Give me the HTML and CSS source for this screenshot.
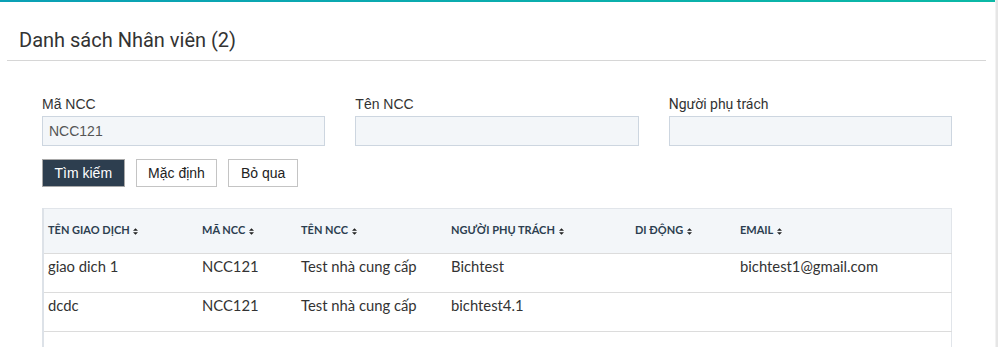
FILE: index.html
```html
<!DOCTYPE html>
<html lang="vi">
<head>
    <meta charset="UTF-8">
    <title>Danh sách Nhân viên</title>
    <link rel="stylesheet" href="styles.css">
</head>
<body>
    <div class="page">
        <div class="panel">
            <div class="topbar"></div>
            <div class="header">
                <h2>Danh sách Nhân viên (2)</h2>
            </div>

            <div class="content">
                <!-- Search form -->
                <div class="filters">
                    <div class="field">
                        <label>Mã NCC</label>
                        <input type="text" value="NCC121">
                    </div>
                    <div class="field">
                        <label>Tên NCC</label>
                        <input type="text">
                    </div>
                    <div class="field">
                        <label>Người phụ trách</label>
                        <input type="text">
                    </div>
                </div>

                <div class="actions">
                    <button class="btn btn-dark">Tìm kiếm</button>
                    <button class="btn">Mặc định</button>
                    <button class="btn">Bỏ qua</button>
                </div>

                <!-- Result table -->
                <table class="grid">
                    <thead>
                        <tr>
                            <th class="c1">Tên giao dịch <svg class="sort" viewBox="0 0 6 8"><path d="M0 3.2L3 0 6 3.2ZM0 4.8L3 8 6 4.8Z"/></svg></th>
                            <th class="c2">Mã NCC <svg class="sort" viewBox="0 0 6 8"><path d="M0 3.2L3 0 6 3.2ZM0 4.8L3 8 6 4.8Z"/></svg></th>
                            <th class="c3">Tên NCC <svg class="sort" viewBox="0 0 6 8"><path d="M0 3.2L3 0 6 3.2ZM0 4.8L3 8 6 4.8Z"/></svg></th>
                            <th class="c4">Người phụ trách <svg class="sort" viewBox="0 0 6 8"><path d="M0 3.2L3 0 6 3.2ZM0 4.8L3 8 6 4.8Z"/></svg></th>
                            <th class="c5">Di động <svg class="sort" viewBox="0 0 6 8"><path d="M0 3.2L3 0 6 3.2ZM0 4.8L3 8 6 4.8Z"/></svg></th>
                            <th class="c6">Email <svg class="sort" viewBox="0 0 6 8"><path d="M0 3.2L3 0 6 3.2ZM0 4.8L3 8 6 4.8Z"/></svg></th>
                        </tr>
                    </thead>
                    <tbody>
                        <tr>
                            <td>giao dich 1</td>
                            <td>NCC121</td>
                            <td>Test nhà cung cấp</td>
                            <td>Bichtest</td>
                            <td></td>
                            <td>bichtest1@gmail.com</td>
                        </tr>
                        <tr>
                            <td>dcdc</td>
                            <td>NCC121</td>
                            <td>Test nhà cung cấp</td>
                            <td>bichtest4.1</td>
                            <td></td>
                            <td></td>
                        </tr>
                        <tr class="empty">
                            <td></td><td></td><td></td><td></td><td></td><td></td>
                        </tr>
                    </tbody>
                </table>
            </div>
        </div>
        <div class="side"></div>
    </div>
</body>
</html>
```

FILE: styles.css
```css
body {
    margin: 0;
    background: #fff;
    font-family: "Liberation Sans", Arial, sans-serif;
    color: #333;
    overflow: hidden;
}
.page {
    display: flex;
    height: 347px;
}
.panel {
    flex: 1;
    min-width: 0;
}
.side {
    width: 2px;
    background: #e6e6e6;
    border-left: 1px solid #f2f2f2;
}
.topbar {
    height: 2px;
    background: linear-gradient(to right, #0aa0b5, #0bb9a6);
}
.header {
    margin: 0 9px 0 7px;
    height: 59px;
    border-bottom: 1px solid #d6d6d6;
    box-sizing: border-box;
    padding: 26px 0 0 12px;
}
.header h2 {
    margin: 0;
    font-family: Roboto, sans-serif;
    font-weight: 400;
    font-size: 20px;
    line-height: 24px;
    color: #333;
}
.content {
    margin-left: 42px;
    width: 910px;
    padding-top: 35px;
}
.filters {
    display: grid;
    grid-template-columns: repeat(3, 1fr);
    gap: 30px;
}
.field label {
    display: block;
    font-size: 14px;
    line-height: 17px;
    margin-bottom: 3px;
    color: #333;
}
.field:last-child label {
    font-family: Roboto, sans-serif;
}
.field input {
    display: block;
    width: 100%;
    box-sizing: border-box;
    height: 30px;
    border: 1px solid #cdd6e0;
    background: #f3f6f9;
    padding: 0 6px;
    font-family: "Liberation Sans", Arial, sans-serif;
    font-size: 14px;
    color: #555;
    outline: none;
}
.actions {
    display: flex;
    gap: 11px;
    margin-top: 13px;
}
.btn {
    height: 28px;
    padding: 0 11.5px;
    background: #fff;
    border: 1px solid #c4c4c4;
    font-family: "Liberation Sans", Arial, sans-serif;
    font-size: 14px;
    color: #222;
    cursor: pointer;
}
.btn-dark {
    background: #2d3e4f;
    color: #fff;
    border-color: #a8a8a8;
}
.grid {
    margin-top: 21px;
    width: 910px;
    border-collapse: collapse;
    border-top: 1px solid #e1e5ea;
    border-left: 2px solid #dde2e8;
    border-right: 1px solid #e1e5ea;
    font-family: Lato, sans-serif;
    table-layout: fixed;
}
.grid th {
    box-sizing: border-box;
    background: #f3f6f9;
    height: 45px;
    text-align: left;
    text-transform: uppercase;
    font-size: 11px;
    font-weight: 700;
    color: #2c3e50;
    padding: 0 0 3px 4px;
    border-bottom: 1px solid #dcdcdc;
    white-space: nowrap;
}
.grid td {
    box-sizing: border-box;
    height: 39px;
    padding: 3px 0 0 4px;
    font-size: 14.8px;
    color: #333;
    border-bottom: 1px solid #dcdcdc;
    vertical-align: top;
}
.grid .empty td {
    height: 20px;
    border-bottom: none;
}
.c1 { width: 155px; }
.c2 { width: 99px; }
.c3 { width: 150px; }
.c4 { width: 184px; }
.c5 { width: 105px; }
.sort {
    width: 5px;
    height: 7px;
    margin-left: 1px;
    vertical-align: -1px;
    fill: #222;
}
```
